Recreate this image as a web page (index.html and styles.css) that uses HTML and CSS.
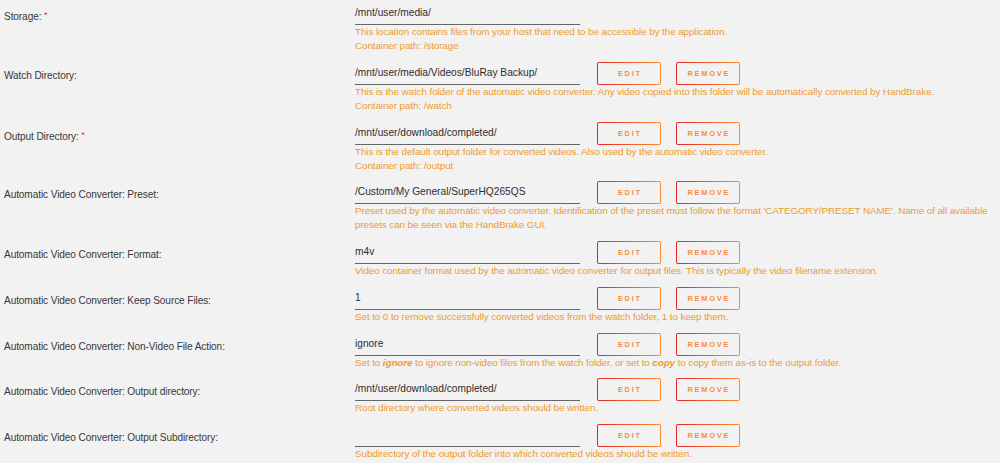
FILE: index.html
```html
<!DOCTYPE html>
<html lang="en">
  <head>
    <meta charset="UTF-8" />
    <title>HandBrake Template</title>
    <link rel="stylesheet" href="styles.css">
  </head>
  <body>
    <div class="form">
      <div class="row">
        <div class="label">Storage: <span class="req">*</span></div>
        <div class="field">
          <div class="controls">
            <div class="value">/mnt/user/media/</div>
          </div>
          <div class="help">This location contains files from your host that need to be accessible by the application.<br>Container path: /storage</div>
        </div>
      </div>

      <div class="row">
        <div class="label">Watch Directory:</div>
        <div class="field">
          <div class="controls">
            <div class="value">/mnt/user/media/Videos/BluRay Backup/</div>
            <button class="btn">EDIT</button>
            <button class="btn">REMOVE</button>
          </div>
          <div class="help">This is the watch folder of the automatic video converter. Any video copied into this folder will be automatically converted by HandBrake.<br>Container path: /watch</div>
        </div>
      </div>

      <div class="row">
        <div class="label">Output Directory: <span class="req">*</span></div>
        <div class="field">
          <div class="controls">
            <div class="value">/mnt/user/download/completed/</div>
            <button class="btn">EDIT</button>
            <button class="btn">REMOVE</button>
          </div>
          <div class="help">This is the default output folder for converted videos. Also used by the automatic video converter.<br>Container path: /output</div>
        </div>
      </div>

      <div class="row">
        <div class="label">Automatic Video Converter: Preset:</div>
        <div class="field">
          <div class="controls">
            <div class="value">/Custom/My General/SuperHQ265QS</div>
            <button class="btn">EDIT</button>
            <button class="btn">REMOVE</button>
          </div>
          <div class="help">Preset used by the automatic video converter. Identification of the preset must follow the format 'CATEGORY/PRESET NAME'. Name of all available<br>presets can be seen via the HandBrake GUI.</div>
        </div>
      </div>

      <div class="row">
        <div class="label">Automatic Video Converter: Format:</div>
        <div class="field">
          <div class="controls">
            <div class="value">m4v</div>
            <button class="btn">EDIT</button>
            <button class="btn">REMOVE</button>
          </div>
          <div class="help">Video container format used by the automatic video converter for output files. This is typically the video filename extension.</div>
        </div>
      </div>

      <div class="row">
        <div class="label">Automatic Video Converter: Keep Source Files:</div>
        <div class="field">
          <div class="controls">
            <div class="value">1</div>
            <button class="btn">EDIT</button>
            <button class="btn">REMOVE</button>
          </div>
          <div class="help">Set to 0 to remove successfully converted videos from the watch folder, 1 to keep them.</div>
        </div>
      </div>

      <div class="row">
        <div class="label">Automatic Video Converter: Non-Video File Action:</div>
        <div class="field">
          <div class="controls">
            <div class="value">ignore</div>
            <button class="btn">EDIT</button>
            <button class="btn">REMOVE</button>
          </div>
          <div class="help">Set to <b><i>ignore</i></b> to ignore non-video files from the watch folder, or set to <b><i>copy</i></b> to copy them as-is to the output folder.</div>
        </div>
      </div>

      <div class="row">
        <div class="label">Automatic Video Converter: Output directory:</div>
        <div class="field">
          <div class="controls">
            <div class="value">/mnt/user/download/completed/</div>
            <button class="btn">EDIT</button>
            <button class="btn">REMOVE</button>
          </div>
          <div class="help">Root directory where converted videos should be written.</div>
        </div>
      </div>

      <div class="row">
        <div class="label">Automatic Video Converter: Output Subdirectory:</div>
        <div class="field">
          <div class="controls">
            <div class="value"></div>
            <button class="btn">EDIT</button>
            <button class="btn">REMOVE</button>
          </div>
          <div class="help">Subdirectory of the output folder into which converted videos should be written.</div>
        </div>
      </div>
    </div>
  </body>
</html>
```

FILE: styles.css
```css
body {
  margin: 0;
  padding: 2px 0 0 4px;
  background-color: #f2f2f2;
  font-family: 'Liberation Sans', Arial, sans-serif;
  color: #383838;
}

.row {
  display: grid;
  grid-template-columns: 351px 1fr;
  margin-bottom: 8.75px;
}

.label {
  font-size: 10.1px;
  letter-spacing: -0.1px;
  line-height: 23px;
  padding-top: 2px;
}

.req {
  color: #e22828;
  font-size: 9px;
  vertical-align: 2px;
}

.controls {
  display: flex;
  align-items: center;
  height: 23px;
}

.value {
  width: 225px;
  height: 22px;
  line-height: 21px;
  border-bottom: 1px solid #666;
  font-size: 10.2px;
  color: #2e2e2e;
  margin-right: 17px;
}

.btn {
  width: 64px;
  height: 23px;
  margin-right: 15px;
  padding: 0;
  border: 1.5px solid transparent;
  border-radius: 2px;
  background: linear-gradient(#f2f2f2, #f2f2f2) padding-box,
    linear-gradient(90deg, #e22828, #ff8c2f) border-box;
  color: #f58c40;
  font-family: 'Liberation Sans', Arial, sans-serif;
  font-weight: bold;
  font-size: 7.4px;
  letter-spacing: 1.8px;
  text-indent: 1.8px;
  cursor: pointer;
}

.help {
  font-size: 9.9px;
  line-height: 14px;
  color: #ec9c30;
  letter-spacing: -0.1px;
}
```
